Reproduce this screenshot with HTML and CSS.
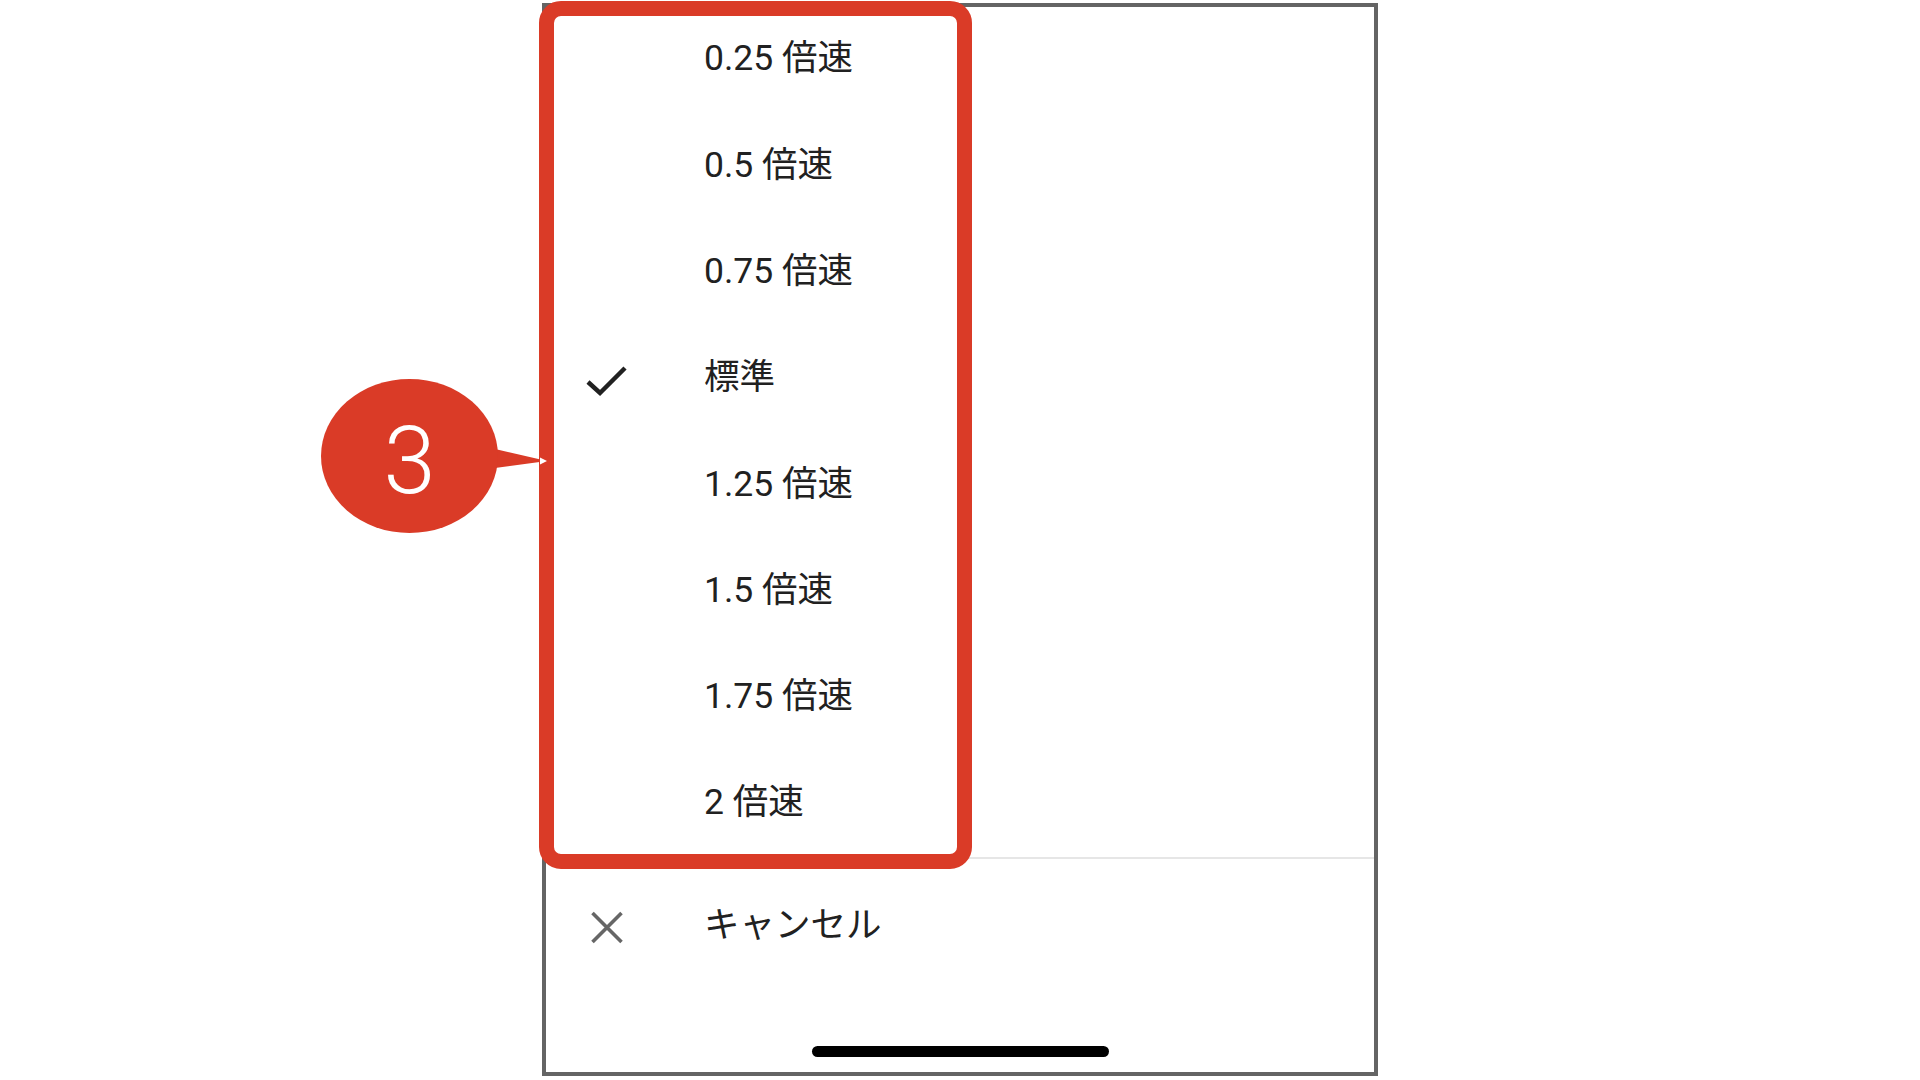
FILE: index.html
```html
<!DOCTYPE html>
<html lang="ja">
<head>
    <meta charset="UTF-8">
    <meta name="viewport" content="width=device-width, initial-scale=1.0">
    <title>再生速度</title>
    <link rel="stylesheet" href="styles.css">
</head>
<body>
    <div class="stage">
        <div class="screen">
            <!-- 再生速度の一覧 -->
            <ul class="speed-list">
                <li class="row"><span class="icon"></span><span class="label">0.25 倍速</span></li>
                <li class="row"><span class="icon"></span><span class="label">0.5 倍速</span></li>
                <li class="row"><span class="icon"></span><span class="label">0.75 倍速</span></li>
                <li class="row selected">
                    <span class="icon">
                        <svg width="48" height="48" viewBox="0 0 48 48">
                            <polyline points="5,28 17,39 42,14" fill="none" stroke="#212121" stroke-width="4.5"/>
                        </svg>
                    </span>
                    <span class="label">標準</span>
                </li>
                <li class="row"><span class="icon"></span><span class="label">1.25 倍速</span></li>
                <li class="row"><span class="icon"></span><span class="label">1.5 倍速</span></li>
                <li class="row"><span class="icon"></span><span class="label">1.75 倍速</span></li>
                <li class="row"><span class="icon"></span><span class="label">2 倍速</span></li>
            </ul>

            <div class="divider"></div>

            <!-- キャンセル -->
            <div class="row cancel">
                <span class="icon">
                    <svg width="48" height="48" viewBox="0 0 48 48">
                        <path d="M9.5 12 L38.5 41 M38.5 12 L9.5 41" fill="none" stroke="#666" stroke-width="3.6"/>
                    </svg>
                </span>
                <span class="label">キャンセル</span>
            </div>

            <div class="home-bar"></div>
        </div>

        <!-- 注釈 -->
        <div class="highlight"></div>
        <svg class="pointer" width="60" height="30" viewBox="0 0 60 30">
            <polygon points="0,4 52,16 0,23" fill="#da3b27"/>
            <polygon points="45,12.5 52,16 45,19.5" fill="#fff"/>
        </svg>
        <div class="badge"><span>3</span></div>
    </div>
</body>
</html>
```
FILE: styles.css
```css
body {
    margin: 0;
    background: #fff;
    font-family: "Roboto", "Noto Sans CJK JP", sans-serif;
    color: #212121;
}
.stage {
    position: relative;
    width: 1920px;
    height: 1080px;
    padding-top: 3px;
    box-sizing: border-box;
}
.screen {
    width: 836px;
    height: 1073px;
    margin: 0 auto;
    box-sizing: border-box;
    border: 4px solid #646464;
    display: flex;
    flex-direction: column;
}
.speed-list {
    list-style: none;
    margin: -1px 0 1px;
    padding: 0;
}
.row {
    height: 106.3px;
    display: flex;
    align-items: center;
    font-size: 35.5px;
    line-height: 1;
}
.icon {
    width: 158px;
    flex-shrink: 0;
    display: flex;
    align-items: center;
}
.icon svg {
    margin-left: 37px;
}
.divider {
    height: 2px;
    background: #e6e6e6;
}
.row.cancel {
    height: 132px;
}
.home-bar {
    width: 297px;
    height: 11px;
    margin: auto auto 15px;
    background: #000;
    border-radius: 6px;
}
.highlight {
    position: absolute;
    left: 539px;
    top: 1px;
    width: 433px;
    height: 868px;
    box-sizing: border-box;
    border: 15px solid #da3b27;
    border-radius: 22px;
}
.badge {
    position: absolute;
    left: 321px;
    top: 379px;
    width: 177px;
    height: 154px;
    border-radius: 50%;
    background: #da3b27;
    display: flex;
    align-items: center;
    justify-content: center;
}
.badge span {
    color: #fff;
    font-family: "Roboto", sans-serif;
    font-weight: 300;
    font-size: 94px;
    line-height: 1;
    margin-top: 10px;
}
.pointer {
    position: absolute;
    left: 495px;
    top: 445px;
}
```
